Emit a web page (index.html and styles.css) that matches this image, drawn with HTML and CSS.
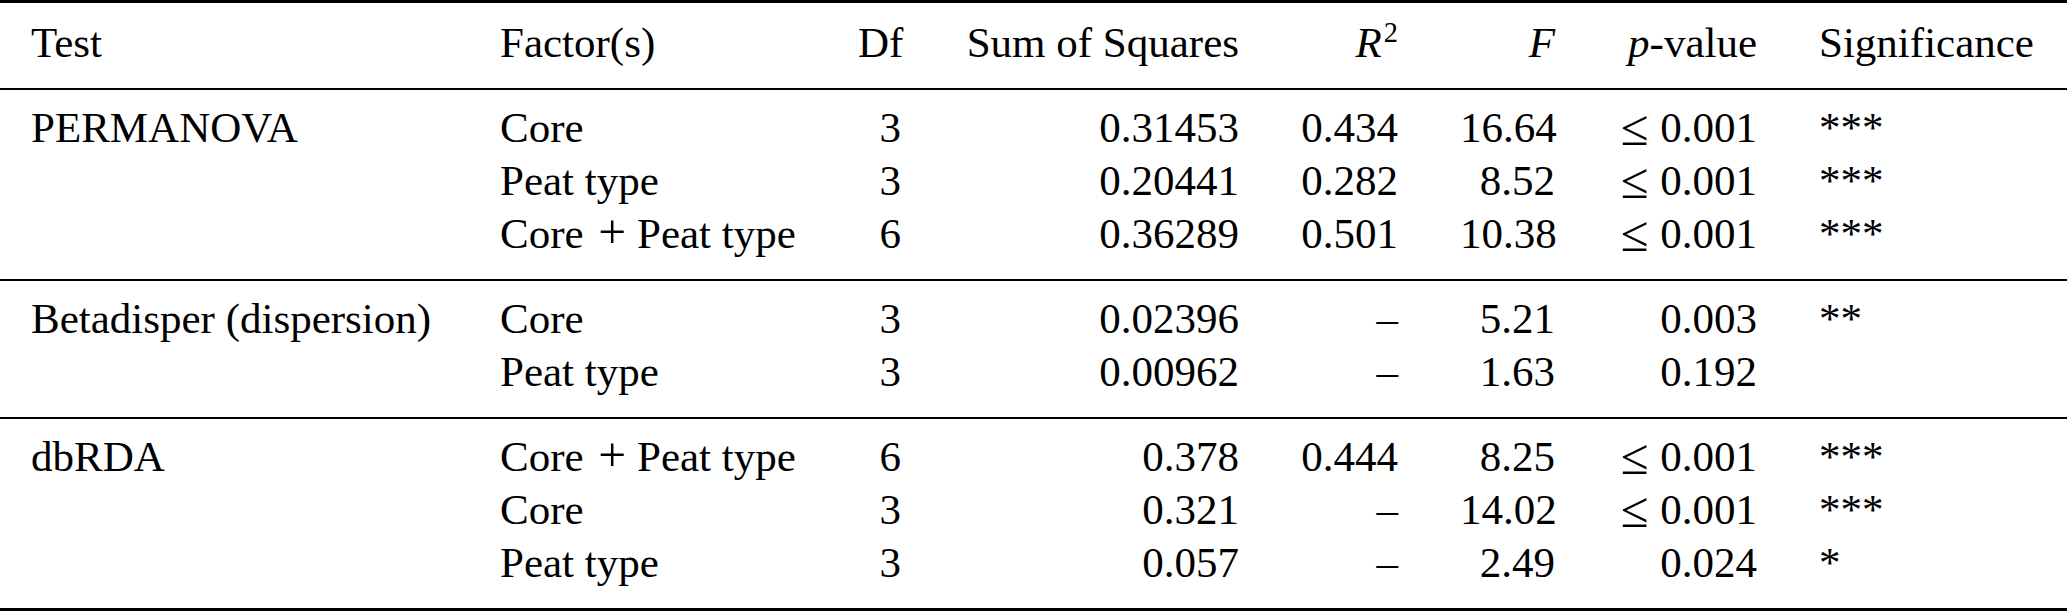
FILE: index.html
```html
<!DOCTYPE html>
<html lang="en">
<head>
<meta charset="utf-8">
<title>Statistical tests</title>
<link rel="stylesheet" href="styles.css">
</head>
<body>
<table class="stats">
  <colgroup>
    <col class="c-test">
    <col class="c-factor">
    <col class="c-df">
    <col class="c-ss">
    <col class="c-r2">
    <col class="c-f">
    <col class="c-p">
    <col class="c-sig">
  </colgroup>
  <thead>
    <tr>
      <th>Test</th>
      <th>Factor(s)</th>
      <th class="r">Df</th>
      <th class="r">Sum of Squares</th>
      <th class="r"><i class="m">R</i><sup class="sup">2</sup></th>
      <th class="r"><i class="m">F</i></th>
      <th class="r"><i class="m">p</i>-value</th>
      <th>Significance</th>
    </tr>
  </thead>
  <tbody>
    <tr>
      <td>PERMANOVA</td>
      <td>Core</td>
      <td class="r">3</td>
      <td class="r">0.31453</td>
      <td class="r">0.434</td>
      <td class="r">16.64</td>
      <td class="r"><span class="le">&le;</span>&nbsp;0.001</td>
      <td>***</td>
    </tr>
    <tr>
      <td></td>
      <td>Peat type</td>
      <td class="r">3</td>
      <td class="r">0.20441</td>
      <td class="r">0.282</td>
      <td class="r">8.52</td>
      <td class="r"><span class="le">&le;</span>&nbsp;0.001</td>
      <td>***</td>
    </tr>
    <tr>
      <td></td>
      <td>Core <span class="op">+</span> Peat type</td>
      <td class="r">6</td>
      <td class="r">0.36289</td>
      <td class="r">0.501</td>
      <td class="r">10.38</td>
      <td class="r"><span class="le">&le;</span>&nbsp;0.001</td>
      <td>***</td>
    </tr>
  </tbody>
  <tbody>
    <tr>
      <td>Betadisper (dispersion)</td>
      <td>Core</td>
      <td class="r">3</td>
      <td class="r">0.02396</td>
      <td class="r">&ndash;</td>
      <td class="r">5.21</td>
      <td class="r">0.003</td>
      <td>**</td>
    </tr>
    <tr>
      <td></td>
      <td>Peat type</td>
      <td class="r">3</td>
      <td class="r">0.00962</td>
      <td class="r">&ndash;</td>
      <td class="r">1.63</td>
      <td class="r">0.192</td>
      <td></td>
    </tr>
  </tbody>
  <tbody>
    <tr>
      <td>dbRDA</td>
      <td>Core <span class="op">+</span> Peat type</td>
      <td class="r">6</td>
      <td class="r">0.378</td>
      <td class="r">0.444</td>
      <td class="r">8.25</td>
      <td class="r"><span class="le">&le;</span>&nbsp;0.001</td>
      <td>***</td>
    </tr>
    <tr>
      <td></td>
      <td>Core</td>
      <td class="r">3</td>
      <td class="r">0.321</td>
      <td class="r">&ndash;</td>
      <td class="r">14.02</td>
      <td class="r"><span class="le">&le;</span>&nbsp;0.001</td>
      <td>***</td>
    </tr>
    <tr>
      <td></td>
      <td>Peat type</td>
      <td class="r">3</td>
      <td class="r">0.057</td>
      <td class="r">&ndash;</td>
      <td class="r">2.49</td>
      <td class="r">0.024</td>
      <td>*</td>
    </tr>
  </tbody>
</table>
</body>
</html>
```
FILE: styles.css
```css
html, body {
  margin: 0;
  padding: 0;
  background: #ffffff;
}

body {
  font-family: "Liberation Serif", "Times New Roman", serif;
  font-size: 43px;
  color: #000000;
}

.stats {
  width: 2067px;
  table-layout: fixed;
  border-collapse: separate;
  border-spacing: 0;
}

.c-test { width: 469px; }
.c-factor { width: 358px; }
.c-df { width: 105px; }
.c-ss { width: 338px; }
.c-r2 { width: 159px; }
.c-f { width: 157px; }
.c-p { width: 202px; }
.c-sig { width: 279px; }

.stats th,
.stats td {
  padding: 0 31px;
  line-height: 53px;
  white-space: nowrap;
  font-weight: normal;
  text-align: left;
  vertical-align: top;
}

.stats .r {
  text-align: right;
}

.stats thead th {
  padding-top: 13px;
  padding-bottom: 19px;
  border-top: 3px solid #000;
  border-bottom: 2px solid #000;
}

.stats tbody tr:first-child td {
  padding-top: 11px;
}

.stats tbody tr:last-child td {
  padding-bottom: 19px;
  border-bottom: 2px solid #000;
}

.stats tbody:last-child tr:last-child td {
  border-bottom-width: 3px;
}

.m {
  font-style: italic;
}

.sup {
  font-size: 0.66em;
  line-height: 0;
  vertical-align: 15px;
  margin-left: 2px;
}

.le {
  display: inline-block;
  font-size: 1.18em;
  line-height: 1;
  vertical-align: -3px;
  margin-right: 1px;
}

.op {
  display: inline-block;
  font-size: 1.15em;
  line-height: 1;
  margin-left: 4px;
}
```
